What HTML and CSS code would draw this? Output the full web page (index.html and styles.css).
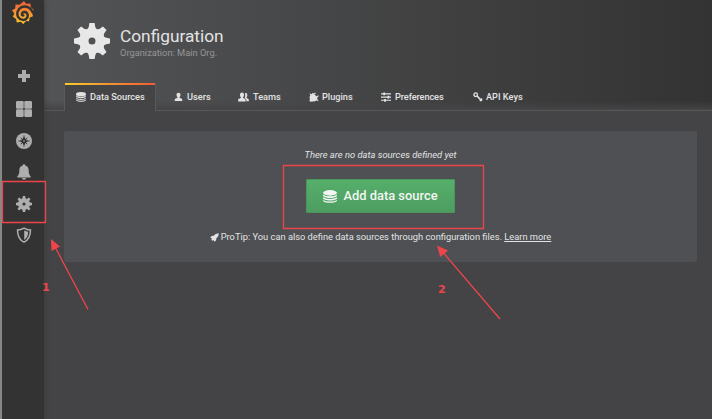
FILE: index.html
```html
<!DOCTYPE html>
<html lang="en">
<head>
<meta charset="utf-8">
<title>Configuration</title>
<link rel="stylesheet" href="styles.css">
</head>
<body>
<svg class="defs" aria-hidden="true">
  <defs>
    <linearGradient id="flame" x1="0" y1="0" x2="0" y2="1"><stop offset="0" stop-color="#f05a3a"/><stop offset="1" stop-color="#fbca25"/></linearGradient>
    <path id="tooth" d="M-5.6-10.5L-4.3-12Q-3-13.5-2.6-18H2.6Q3-13.5 4.3-12L5.6-10.5z"/>
    <symbol id="gear" viewBox="-18 -18 36 36">
      <circle r="8.2" fill="none" stroke="currentColor" stroke-width="9.4"/>
      <g fill="currentColor"><use href="#tooth"/><use href="#tooth" transform="rotate(45)"/><use href="#tooth" transform="rotate(90)"/><use href="#tooth" transform="rotate(135)"/><use href="#tooth" transform="rotate(180)"/><use href="#tooth" transform="rotate(225)"/><use href="#tooth" transform="rotate(270)"/><use href="#tooth" transform="rotate(315)"/></g>
    </symbol>
    <symbol id="database" viewBox="0 0 16 15" preserveAspectRatio="none">
      <g fill="currentColor"><ellipse cx="8" cy="3.3" rx="8" ry="3.2"/><path d="M0 5.100Q2.500 7.300 8 7.300T16 5.100V6.300C15.700 8 12 9.200 8 9.200S.3 8 0 6.300zM0 8.500Q2.500 10.400 8 10.400T16 8.500V9.500C15.700 11 12 12.100 8 12.100S.3 11 0 9.500zM0 11.400Q2.500 13.200 8 13.200T16 11.400V12C15.700 13.600 12 14.800 8 14.800S.3 13.600 0 12z"/></g>
    </symbol>
  </defs>
</svg>
<div class="app">
  <nav class="sidebar">
    <svg class="logo" viewBox="0 0 22 24"><path fill="url(#flame)" d="M12 0l2.200 2.700 4.200-.1.400 3.600 2.800 2.500-1.500 3 .9 3.500-3.200 1.200-.8 3.800-3-.2-2.700 3.100-2.600-2.400-4 .9-.5-3.500L.900 15.700 2.300 12.400 0 9.200l3.200-1.700.3-4 4.100.2z"/><path fill="none" stroke="#333333" stroke-width="2.400" stroke-linecap="round" d="M20.500 11C19 6.500 13.500 4.300 9.500 6.200S4.300 12.900 6.200 16.200s7.200 3.700 8.900.7-.3-6.500-3.100-5.900-2.500 3.700-.7 3.500"/></svg>
    <svg class="side-icon" viewBox="0 0 16 16"><path fill="currentColor" d="M6 2h4v4h4v4h-4v4H6v-4H2V6h4z"/></svg>
    <svg class="side-icon" viewBox="0 0 16 16"><g fill="currentColor"><rect width="7.700" height="7.700" rx="1.300"/><rect x="8.300" width="7.700" height="7.700" rx="1.300"/><rect y="8.300" width="7.700" height="7.700" rx="1.300"/><rect x="8.300" y="8.300" width="7.700" height="7.700" rx="1.300"/></g></svg>
    <svg class="side-icon" viewBox="0 0 16 16"><circle cx="8" cy="8" r="8" fill="currentColor"/><path fill="#333333" d="M8 1.500L9.100 6 11.800 4.200 10 6.900 14.500 8 10 9.100l1.800 2.700L9.100 10 8 14.500 6.900 10l-2.700 1.800L6 9.100 1.500 8 6 6.900 4.200 4.200 6.900 6z"/><circle cx="8" cy="8" r=".8" fill="currentColor"/></svg>
    <svg class="side-icon" viewBox="0 0 16 16"><path fill="currentColor" d="M8 .3c.8 0 1.300.5 1.300 1.300 2.400.6 3.400 2.600 3.400 4.900 0 3 .5 4.500 2 6v1H1.300v-1c1.500-1.500 2-3 2-6 0-2.300 1-4.300 3.400-4.900C6.700.8 7.200.3 8 .3zM5.700 14h4.600Q9.500 15.800 8 15.800T5.700 14z"/></svg>
    <svg class="side-icon"><use href="#gear"/></svg>
    <svg class="side-icon" viewBox="0 0 16 16"><path fill="none" stroke="currentColor" stroke-width="1.500" d="M8 1.100Q4.600 3 1.500 2.900C1.500 9.200 3.700 13 8 15.200c4.300-2.200 6.500-6 6.500-12.300Q11.400 3 8 1.100z"/><path fill="currentColor" d="M8.200 3.500q2 1 4 1.200c-.1 3.900-1.400 6.500-4 8.200z"/></svg>
  </nav>
  <main class="main">
    <header class="header">
      <div class="heading">
        <svg class="heading-icon"><use href="#gear"/></svg>
        <div><h1>Configuration</h1><div class="subtitle">Organization: Main Org.</div></div>
      </div>
      <div class="tabs">
        <a class="tab active"><svg class="tab-icon"><use href="#database"/></svg>Data Sources</a>
        <a class="tab users"><svg class="tab-icon" viewBox="0 0 10 10"><path fill="currentColor" d="M5 .4c1.500 0 2.200 1 2.200 2.500 0 1.200-.4 2-1 2.500v.8l2 .6c.8.3 1 1 1 2.700H.8c0-1.700.2-2.400 1-2.700l2-.6v-.8c-.6-.5-1-1.300-1-2.500C2.800 1.400 3.500.4 5 .4z"/></svg>Users</a>
        <a class="tab teams"><svg class="tab-icon" viewBox="0 0 11 10"><path fill="currentColor" d="M4 .5c1.400 0 2 1 2 2.300 0 1.200-.4 1.900-.9 2.400v.9l1.700.6c.7.300.9 1 .9 2.800H.1c0-1.800.2-2.500.9-2.800l1.800-.6v-.9C2.300 4.700 2 4 2 2.800 2 1.500 2.600.5 4 .5zM6.800 1.300C8.400.7 9.400 1.700 9.300 3.300c0 1-.3 1.600-.7 2v.8l1.500.6c.6.300.8 1 .8 2.600H8.500c0-1.900-.5-2.700-1.900-3.200.7-1 1-3 .2-4.800z"/></svg>Teams</a>
        <a class="tab plugins"><svg class="tab-icon" viewBox="0 0 10 10"><path fill="currentColor" d="M.5 1.300l2.100 1L3.900.8l5 5-1 1.300 1.700 1.100-.7.700-1.500-.5Q5.500 9.900 3 9.400L1.300 9.700.4 8.600 1 7Q-.1 5 1.300 3.400zM6 .4l.9.800-1.700 1.900-.9-.9zM9 3.200l.8.900L7.800 6l-.9-.9z"/></svg>Plugins</a>
        <a class="tab prefs"><svg class="tab-icon" viewBox="0 0 10 10"><path fill="none" stroke="currentColor" stroke-width="1.100" d="M0 1.900h10M0 5.100h10M0 8.300h10"/><path fill="none" stroke="currentColor" stroke-width="1.800" d="M3.200.500v2.800M7.300 3.700v2.800M4 6.900v2.800"/></svg>Preferences</a>
        <a class="tab keys"><svg class="tab-icon" viewBox="0 0 10 10"><circle cx="2.700" cy="2.700" r="1.800" fill="none" stroke="currentColor" stroke-width="1.300"/><path fill="none" stroke="currentColor" stroke-width="1.700" d="M4 4l4.800 5M6.900 8.800l2.100-2.100"/></svg>API Keys</a>
      </div>
    </header>
    <section class="panel">
      <p class="empty">There are no data sources defined yet</p>
      <a class="button"><svg class="button-icon"><use href="#database"/></svg>Add data source</a>
      <p class="tip"><svg class="rocket" viewBox="0 0 10 10"><path fill="currentColor" d="M9.800.200Q6 .1 4 3L1.800 3.200.2 5.600l2.100.1L1.500 7.500l1 1 1.800-.8.1 2.100 2.400-1.600L7 6Q9.900 4 9.800.200z"/></svg>ProTip: You can also define data sources through configuration files. <a class="link">Learn more</a></p>
    </section>
  </main>
</div>
<svg class="annotations" viewBox="0 0 712 419">
  <g fill="none" stroke="#ee454b" stroke-width="1.300"><path d="M2.500 181.500h43v41h-43zM283.500 165.500h200v63h-200z"/><path d="M88 309.500L54 245M500 319L441 250"/></g>
  <path fill="#ee454b" d="M51 239l9 7.500-8.500 4.500zM437 245.500l11 5-7.800 6.500z"/>
</svg>
<span class="step one">1</span><span class="step two">2</span>
</body>
</html>
```
FILE: styles.css
```css
* { box-sizing: border-box; }
body { margin: 0; width: 712px; height: 419px; overflow: hidden; position: relative; background: #444446; color: #e3e3e4; font: 9.3px/14px Roboto, sans-serif; }
h1, p { margin: 0; font-weight: 400; }
.defs { position: absolute; width: 0; height: 0; }
.app { display: flex; height: 419px; }
.sidebar { width: 44px; flex: none; padding-top: 1px; border-left: 2px solid #858889; background: #333333; color: #aeaeaf; display: flex; flex-direction: column; align-items: center; box-shadow: 0 0 5px #383838; z-index: 1; }
.logo { width: 22px; height: 24px; margin: 0 0 43px -1px; flex: none; }
.side-icon { width: 16px; height: 16px; margin-left: 1px; margin-bottom: 15.600px; flex: none; }
.side-icon:nth-child(2) { margin-bottom: 17px; }
.main { flex: 1; min-width: 0; }
.header { height: 111px; padding: 23px 0 0 21px; border-bottom: 1px solid #59595a; background: linear-gradient(to top, #444446 0, rgba(68,68,70,0) 9px), linear-gradient(90deg, #535456, #333333); }
.heading { display: flex; height: 60px; padding-left: 9px; }
.heading-icon { width: 36px; height: 36px; margin-right: 10px; color: #e8e8e9; }
h1 { font-size: 17.300px; line-height: 22px; margin-top: 2px; }
.subtitle { line-height: 13px; margin-top: -1px; color: #969698; }
.tabs { display: flex; height: 28px; }
.tab { display: flex; align-items: center; height: 28px; padding: 0 0 0 11px; margin-right: 7px; font-size: 9.200px; font-weight: 500; white-space: nowrap; }
.tab.active { width: 90px; margin-right: 8px; border-top: 2px solid; border-image: linear-gradient(90deg, #f7cb2d, #ef5b35) 2 0 0 0; background: #444446; padding-bottom: 2px; box-shadow: 1px 0 #59595a, -1px 0 #59595a; }
.tab-icon { width: 10px; height: 10px; margin-right: 4px; flex: none; }
.users { width: 57px; }
.users .tab-icon { width: 9px; }
.teams { width: 64px; }
.teams .tab-icon { width: 11px; }
.plugins { width: 65px; }
.plugins .tab-icon { margin-right: 3px; }
.prefs { width: 85px; letter-spacing: -.1px; }
.keys .tab-icon { margin-right: 3px; }
.panel { width: 633px; height: 131px; margin: 20px 0 0 20px; padding-top: 17px; border-radius: 2px; background: #4e5053; display: flex; flex-direction: column; align-items: center; }
.empty { font-style: italic; font-size: 9.400px; }
.button { display: flex; align-items: center; justify-content: center; width: 149px; height: 34px; margin: 17px 0; border: 1px solid #49975d; border-radius: 1px; background: linear-gradient(#56af6b, #4d9d61); color: #f3f5f3; font-size: 12.900px; font-weight: 500; }
.button-icon { width: 14px; height: 13px; margin-right: 6px; }
.tip { display: flex; white-space: pre; align-items: center; }
.rocket { width: 9px; height: 9px; margin-right: 2px; }
.link { text-decoration: underline; }
.annotations { position: absolute; inset: 0; width: 712px; height: 419px; z-index: 2; }
.step { position: absolute; z-index: 3; color: #ee454b; font: bold 11px/14px "DejaVu Sans", sans-serif; }
.one { left: 42px; top: 281px; }
.two { left: 438px; top: 283px; }
```
